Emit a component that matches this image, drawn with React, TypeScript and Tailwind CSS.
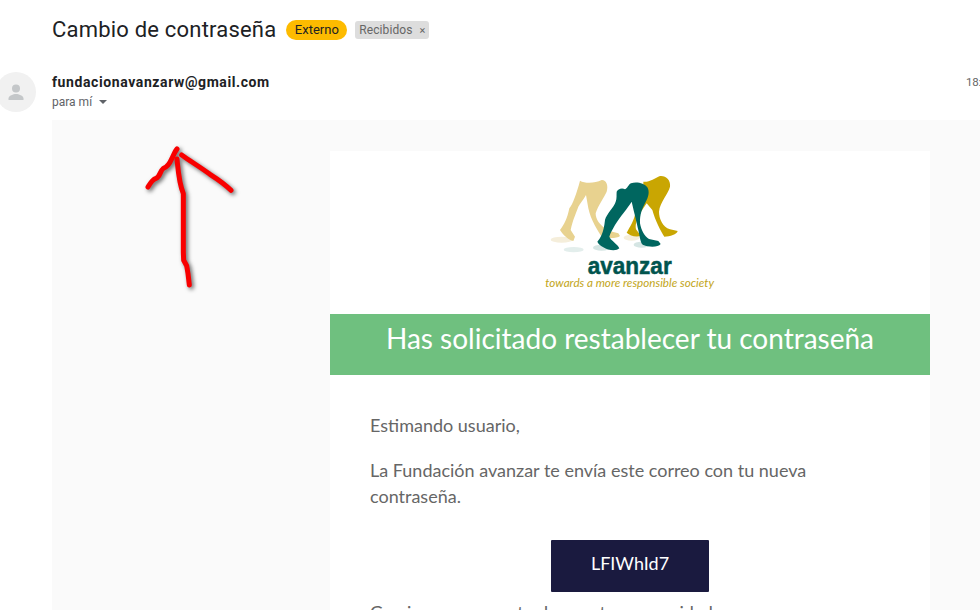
const roboto = { fontFamily: "Roboto, sans-serif" }

function Logo() {
  return (
    <svg width="200" height="135" viewBox="0 0 600 405" className="block" aria-hidden="true">
      {/* soft shadows under the feet */}
      <ellipse cx="95" cy="224" rx="33" ry="9" fill="#f5eedb" />
      <ellipse cx="131" cy="254" rx="30" ry="8" fill="#e3eeec" />
      <ellipse cx="305" cy="218" rx="24" ry="9" fill="#f5eedb" />
      <ellipse cx="335" cy="239" rx="24" ry="9" fill="#d5e5e3" />
      <ellipse cx="215" cy="248" rx="26" ry="9" fill="#d5e5e3" />
      {/* beige leg */}
      <path
        d="M150 47C165 56 195 55 215 45C228 44 236 60 230 80C222 98 205 120 197 145C197 162 207 180 235 197L265 205L270 213C262 220 235 222 215 215C205 200 182 165 175 130L168 90C160 105 150 115 145 125C138 145 128 165 122 195L135 215L130 228C118 226 100 212 90 195C102 180 112 160 118 130C128 118 140 85 150 47Z"
        fill="#e8d28f"
      />
      <g transform="translate(135 15)">
        {/* gold leg */}
        <path
          d="M205 35C220 38 240 25 255 18C272 16 288 30 285 50C280 72 255 95 252 125C252 145 262 170 285 178L308 183C306 193 285 200 268 200C258 185 240 150 232 120L215 100L195 130C185 150 180 165 183 178L198 198C180 202 165 197 155 188C165 170 178 150 182 125L205 90Z"
          fill="#c9a602"
        />
        {/* teal leg */}
        <path
          d="M125 65C128 58 140 52 150 58C158 55 160 44 168 40C185 34 208 40 217 52C224 64 222 80 210 100C202 116 194 132 195 160C198 178 208 200 222 207L250 213L257 222C250 232 222 232 205 225C198 222 196 210 190 180C186 160 178 130 170 95C160 112 135 140 120 165C112 180 105 190 103 200C108 212 128 222 133 235C125 244 100 242 85 232C78 228 70 222 67 215C76 205 86 190 90 150C94 132 118 110 122 95C126 85 124 75 125 65Z"
          fill="#00665f"
        />
      </g>
      <text
        x="299"
        y="327"
        textAnchor="middle"
        fontFamily="'Liberation Sans', sans-serif"
        fontSize="72"
        fontWeight="700"
        fill="#00544e"
        stroke="#00544e"
        strokeWidth="1.500"
        textLength="252"
        lengthAdjust="spacingAndGlyphs"
      >
        avanzar
      </text>
      <text
        x="299"
        y="366"
        textAnchor="middle"
        fontFamily="Lato, sans-serif"
        fontSize="33"
        fontStyle="italic"
        fill="#c2a520"
        textLength="506"
        lengthAdjust="spacingAndGlyphs"
      >
        towards a more responsible society
      </text>
    </svg>
  )
}

// hand-drawn arrow scribbled over the screenshot
function Arrow() {
  return (
    <svg
      width="120"
      height="165"
      viewBox="0 0 360 495"
      className="absolute top-[135px] left-[130px] drop-shadow-[2px_2px_2px_rgba(0,0,0,0.6)]"
      fill="none"
      stroke="#f80000"
      strokeWidth="15"
      strokeLinecap="round"
      strokeLinejoin="round"
      aria-hidden="true"
    >
      <path d="M54 156C60 146 66 134 78 130C90 126 90 108 100 100C114 96 120 84 126 70C132 58 134 50 141 42" />
      <path d="M155 60C180 78 210 96 240 118C262 132 285 148 303 166" />
      <path d="M141 72C144 100 146 140 160 176L160 352L161 376L170 392L174 416L178 450" />
    </svg>
  )
}

export default function App() {
  return (
    <div className="relative h-[610px] w-[980px] overflow-hidden bg-white" style={roboto}>
      {/* Subject */}
      <div className="flex h-[60px] items-center gap-[9px] pl-[52px]">
        <h1 className="text-[22px] leading-7 tracking-[0.2px] text-[#202124]">Cambio de contraseña</h1>
        <span className="ml-px flex h-5 w-[61px] items-center justify-center rounded-[10px] bg-[#fdbb00] text-[13px] text-[#222]">
          Externo
        </span>
        <span className="-ml-px flex h-[18px] w-[74px] items-center justify-center gap-[7px] rounded-[3px] bg-[#dddddd] text-xs tracking-[0.1px] text-[#666]">
          Recibidos
          <span className="text-[11px] leading-none text-[#666]">×</span>
        </span>
      </div>

      {/* Sender */}
      <div className="flex h-[60px] items-start pt-3">
        <div className="-ml-1 flex h-10 w-10 shrink-0 items-center justify-center rounded-full bg-[#f1f1f1]">
          <svg width="24" height="24" viewBox="0 0 24 24" fill="#c4c7c9" aria-hidden="true">
            <circle cx="12" cy="8.5" r="4" />
            <path d="M4.5 18.500c0-3 5-4.500 7.500-4.500s7.500 1.500 7.500 4.500v1.500h-15z" />
          </svg>
        </div>
        <div className="ml-4 flex-1">
          <div className="text-sm leading-5 font-bold tracking-[0.6px] text-[#202124]">
            fundacionavanzarw@gmail.com
          </div>
          <div className="flex items-center text-xs leading-5 text-[#5f6368]">
            para mí
            <span className="ml-[7px] h-0 w-0 border-x-4 border-t-4 border-x-transparent border-t-[#5f6368]" />
          </div>
        </div>
        <div className="-mr-[20px] w-[34px] text-[11.5px] leading-5 tracking-[-0.2px] text-[#666]">18:40</div>
      </div>

      {/* Message body */}
      <div className="ml-[52px] h-[490px] bg-[#fafafa] pt-[31px] pl-[278px]">
        <div className="w-[600px] bg-white" style={{ fontFamily: "Lato, sans-serif" }}>
          <div className="flex h-[163px] justify-center pt-[14px]">
            <Logo />
          </div>
          <div className="flex h-[61px] items-center justify-center bg-[#6fc07f] pb-[14px] text-[28px] text-white">
            Has solicitado restablecer tu contraseña
          </div>
          <div className="px-10 pt-[37px] text-lg leading-[26px] text-[#666]">
            <p>Estimando usuario,</p>
            <p className="mt-[19px]">
              La Fundación avanzar te envía este correo con tu nueva contraseña.
            </p>
            <div className="mx-auto mt-[31px] flex h-[52px] w-[158px] items-center justify-center rounded-[1px] bg-[#1a1a3f] pb-1.5 text-white">
              LFIWhId7
            </div>
            <p className="mt-[7px]">Gracias por ser parte de nuestra comunidad</p>
          </div>
        </div>
      </div>

      <Arrow />
    </div>
  )
}
